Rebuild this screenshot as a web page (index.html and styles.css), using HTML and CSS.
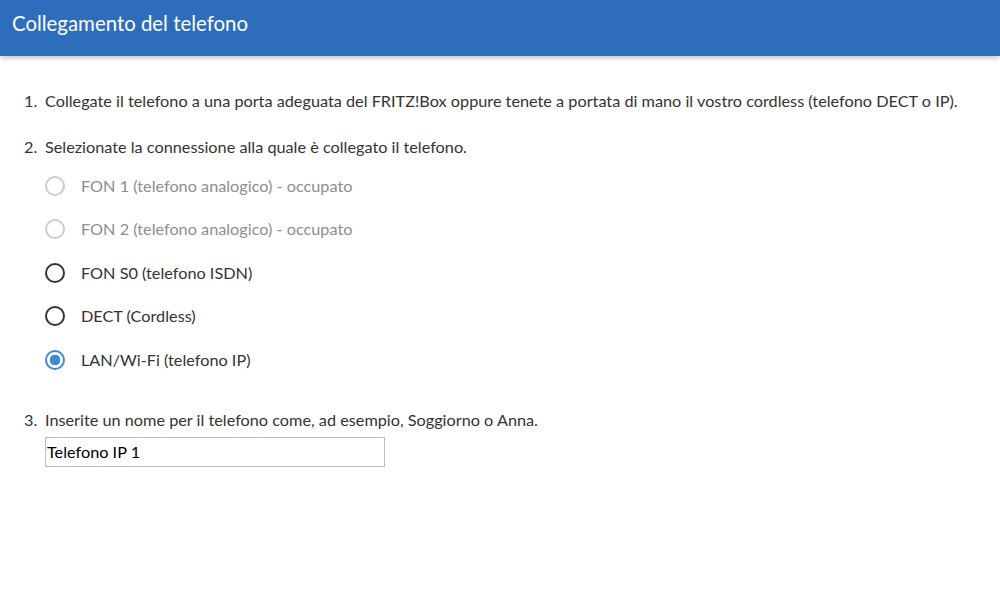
FILE: index.html
```html
<!DOCTYPE html>
<html lang="it">
<head>
<meta charset="utf-8">
<link rel="stylesheet" href="styles.css">
</head>
<body>
<header class="header"><h1 class="title">Collegamento del telefono</h1></header>
<main class="content">
  <ol class="steps">
    <li class="step"><div class="step-body">Collegate il telefono a una porta adeguata del FRITZ!Box oppure tenete a portata di mano il vostro cordless (telefono DECT o IP).</div></li>
    <li class="step"><div class="step-body">Selezionate la connessione alla quale è collegato il telefono.
      <div class="options">
        <label class="option disabled"><span class="radio"></span>FON 1 (telefono analogico) - occupato</label>
        <label class="option disabled"><span class="radio"></span>FON 2 (telefono analogico) - occupato</label>
        <label class="option"><span class="radio"></span>FON S0 (telefono ISDN)</label>
        <label class="option"><span class="radio"></span>DECT (Cordless)</label>
        <label class="option"><span class="radio checked"></span>LAN/Wi-Fi (telefono IP)</label>
      </div></div>
    </li>
    <li class="step step3"><div class="step-body">Inserite un nome per il telefono come, ad esempio, Soggiorno o Anna.
      <div class="field">Telefono IP 1</div></div>
    </li>
  </ol>
</main>
</body>
</html>
```
FILE: styles.css
```css
* { box-sizing: border-box; }
body { margin: 0; font-family: "Lato", "Noto Sans", sans-serif; color: #333; background: #fff; font-size: 16.25px; }
.header { height: 56px; background: #2d6dbc; box-shadow: 0 2px 5px rgba(0,0,0,0.25); display: flex; align-items: center; padding: 0 12px 10px; }
.title { margin: 0; font-weight: normal; font-size: 20.4px; color: #fff; }
.content { padding: 0 24px; }
.steps { margin: 0; padding: 33px 0 0 0; list-style: none; counter-reset: step; }
.step { display: grid; grid-template-columns: 21px 1fr; line-height: 24px; margin-bottom: 22px; counter-increment: step; }
.step::before { content: counter(step) "."; }
.options { display: flex; flex-direction: column; padding-top: 5px; }
.option { display: flex; align-items: center; height: 43.5px; }
.option.disabled { color: #8e8e8e; }
.radio { width: 20px; height: 20px; border-radius: 50%; border: 2px solid #333; margin: 0 16px 0 0; background: #fff; }
.disabled .radio { border-color: #ccc; }
.radio.checked { border-color: #3f89dd; background: radial-gradient(circle, #3f89dd 0 5px, #fff 5.5px); }
.step3 { margin-top: 26px; }
.field { margin-top: 5px; width: 340px; height: 30px; border: 1px solid #b8bcc4; padding: 0 1px; line-height: 28px; color: #000; }
```
